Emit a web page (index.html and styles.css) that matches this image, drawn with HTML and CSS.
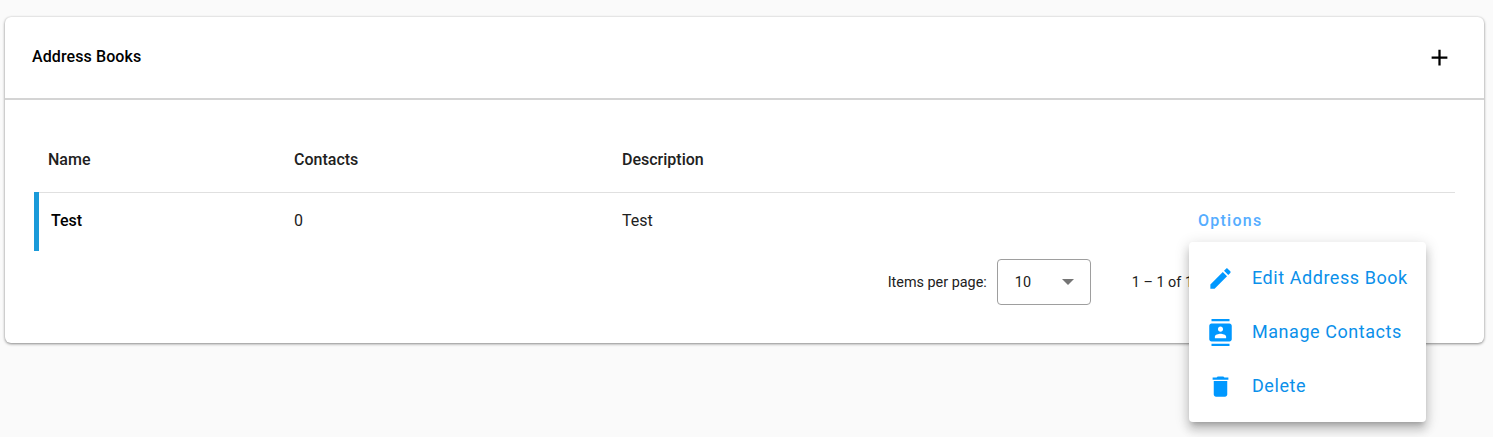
FILE: index.html
```html
<!DOCTYPE html>
<html lang="en">
<head>
    <meta charset="UTF-8">
    <title>Address Books</title>
    <link rel="stylesheet" href="styles.css">
</head>
<body>
    <div class="card">
        <div class="card-header">
            <h1>Address Books</h1>
            <svg class="add-icon" viewBox="0 0 24 24" width="27" height="27"><path d="M19 13h-6v6h-2v-6H5v-2h6V5h2v6h6v2z"/></svg>
        </div>

        <div class="card-body">
            <div class="table-row head-row">
                <div class="cell">Name</div>
                <div class="cell">Contacts</div>
                <div class="cell">Description</div>
                <div class="cell"></div>
            </div>
            <div class="table-row data-row">
                <div class="cell name-cell">Test</div>
                <div class="cell">0</div>
                <div class="cell">Test</div>
                <div class="cell options">Options</div>
            </div>

            <div class="paginator">
                <span class="page-label">Items per page:</span>
                <div class="page-select">
                    <span>10</span>
                    <span class="select-arrow"></span>
                </div>
                <span class="page-range">1 – 1 of 1</span>
            </div>
        </div>
    </div>

    <div class="menu">
        <div class="menu-item">
            <svg viewBox="0 0 24 24" width="27" height="27"><path d="M3 17.25V21h3.75L17.81 9.94l-3.75-3.75L3 17.25zM20.71 7.04c.39-.39.39-1.02 0-1.41l-2.34-2.34c-.39-.39-1.02-.39-1.41 0l-1.83 1.83 3.75 3.75 1.83-1.83z"/></svg>
            <span>Edit Address Book</span>
        </div>
        <div class="menu-item">
            <svg viewBox="0 0 24 24" width="27" height="27"><path d="M20 0H4v2h16V0zM4 24h16v-2H4v2zM20 4H4c-1.1 0-2 .9-2 2v12c0 1.1.9 2 2 2h16c1.1 0 2-.9 2-2V6c0-1.1-.9-2-2-2zm-8 2.75c1.24 0 2.25 1.01 2.25 2.25s-1.01 2.25-2.25 2.25S9.75 10.24 9.75 9 10.76 6.75 12 6.75zM17 17H7v-1.5c0-1.67 3.33-2.5 5-2.5s5 .83 5 2.5V17z"/></svg>
            <span>Manage Contacts</span>
        </div>
        <div class="menu-item">
            <svg viewBox="0 0 24 24" width="27" height="27"><path d="M6 19c0 1.1.9 2 2 2h8c1.1 0 2-.9 2-2V7H6v12zM19 4h-3.5l-1-1h-5l-1 1H5v2h14V4z"/></svg>
            <span>Delete</span>
        </div>
    </div>
</body>
</html>
```

FILE: styles.css
```css
* {
    margin: 0;
    padding: 0;
    box-sizing: border-box;
    font-family: 'Roboto', sans-serif;
}

body {
    height: 437px;
    padding: 17px 9px 0 5px;
    background: #fafafa;
    overflow: hidden;
}

.card {
    height: 326px;
    background: #fff;
    border-radius: 6px;
    box-shadow: 0 1px 3px rgba(0, 0, 0, 0.45), 0 0 2px rgba(0, 0, 0, 0.08);
}

.card-header {
    display: flex;
    justify-content: space-between;
    align-items: center;
    height: 83px;
    padding: 0 31px 0 27px;
    border-bottom: 2px solid #d4d4d4;
}

h1 {
    margin-top: -2px;
    font-size: 16px;
    font-weight: 500;
    letter-spacing: 0.1px;
    color: #000;
}

.add-icon {
    fill: #000;
}

.card-body {
    padding: 27px 29px 0 29px;
}

.table-row {
    display: grid;
    grid-template-columns: 260px 328px 576px 257px;
    align-items: center;
    font-size: 16px;
    color: #212121;
}

.head-row {
    height: 66px;
    font-weight: 500;
    border-bottom: 1px solid #e0e0e0;
}

.head-row .cell:first-child {
    padding-left: 14px;
}

.data-row {
    height: 59px;
    margin-top: -1px;
    padding-bottom: 2px;
}

.name-cell {
    align-self: stretch;
    display: flex;
    align-items: center;
    margin-bottom: -2px;
    padding-left: 12px;
    padding-bottom: 2px;
    border-left: 5px solid #1a9ad9;
    font-weight: 500;
    color: #000;
}

.options {
    font-weight: 500;
    letter-spacing: 1.25px;
    color: #55adff;
}

.paginator {
    display: flex;
    justify-content: flex-end;
    align-items: center;
    margin-top: 8px;
    padding-right: 262px;
    font-size: 14.4px;
    color: #212121;
}

.page-select {
    display: flex;
    justify-content: space-between;
    align-items: center;
    width: 94px;
    height: 46px;
    margin: 0 41px 0 10px;
    padding: 0 16px 0 17px;
    border: 1px solid #9e9e9e;
    border-radius: 4px;
}

.select-arrow {
    border-left: 6px solid transparent;
    border-right: 6px solid transparent;
    border-top: 6px solid #757575;
}

.menu {
    position: absolute;
    top: 242px;
    left: 1189px;
    width: 237px;
    height: 180px;
    padding: 9px 0;
    background: #fff;
    border-radius: 4px;
    box-shadow: 0 5px 5px -3px rgba(0,0,0,.2), 0 8px 10px 1px rgba(0,0,0,.14), 0 3px 14px 2px rgba(0,0,0,.12);
}

.menu-item {
    display: flex;
    align-items: center;
    gap: 18px;
    height: 54px;
    padding-left: 18px;
    font-size: 18px;
    letter-spacing: 0.55px;
    color: #0b90ea;
}

.menu-item span {
    padding-bottom: 2px;
}

.menu-item svg {
    fill: #0098ff;
}
```
